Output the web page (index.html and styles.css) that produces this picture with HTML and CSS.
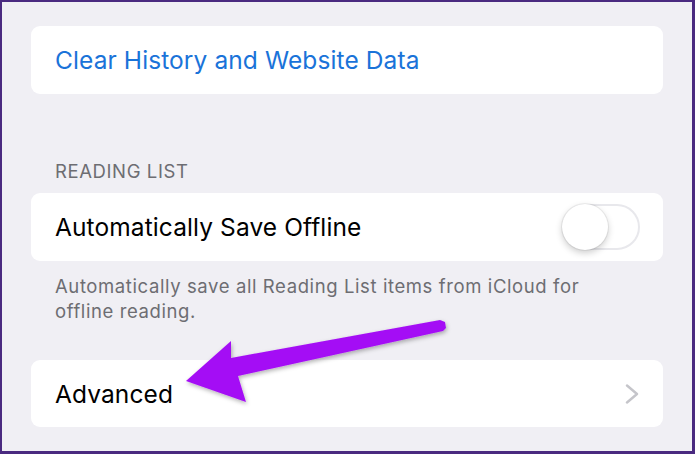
FILE: index.html
```html
<!DOCTYPE html>
<html lang="en">
<head>
    <meta charset="UTF-8">
    <meta name="viewport" content="width=device-width, initial-scale=1.0">
    <title>Safari Settings</title>
    <link rel="stylesheet" href="styles.css">
</head>
<body>
    <div class="frame">
        <div class="card">
            <span class="link">Clear History and Website Data</span>
        </div>

        <div class="section-title">READING LIST</div>
        <div class="card">
            <span class="label">Automatically Save Offline</span>
            <div class="toggle"><div class="knob"></div></div>
        </div>
        <p class="footer">Automatically save all Reading List items from iCloud for offline reading.</p>

        <div class="card last">
            <span class="label">Advanced</span>
            <svg class="chevron" width="14" height="20" viewBox="0 0 14 20">
                <polyline points="2,1.5 12,10 2,18.5" fill="none" stroke="#c5c5ca" stroke-width="2.4" stroke-linecap="round" stroke-linejoin="round"/>
            </svg>
        </div>

        <!-- annotation arrow drawn over the screenshot -->
        <svg class="arrow" width="695" height="454" viewBox="0 0 695 454">
            <defs>
                <filter id="shade" x="-10%" y="-30%" width="120%" height="160%">
                    <feDropShadow dx="1" dy="2" stdDeviation="2" flood-color="#000" flood-opacity="0.3"/>
                </filter>
            </defs>
            <polygon points="186,381 231,341 231,358 440,320 445,322 446,328 443,331 238,376 246,402" fill="#a40ef5" filter="url(#shade)"/>
        </svg>
    </div>
</body>
</html>
```

FILE: styles.css
```css
html, body {
    margin: 0;
    padding: 0;
}

body {
    font-family: Inter, "Liberation Sans", sans-serif;
    background: #efeef3;
}

.frame {
    position: relative;
    box-sizing: border-box;
    width: 695px;
    height: 454px;
    border: 2px solid #4a2a80;
    border-right-width: 3px;
    border-bottom-width: 3px;
    background: #f0eff4;
    padding: 24px 29px 0 29px;
    overflow: hidden;
}

.card {
    display: flex;
    align-items: center;
    justify-content: space-between;
    background: #fff;
    border-radius: 9px;
    height: 68px;
    padding: 0 23px 0 24px;
    box-sizing: border-box;
}

.link {
    font-size: 24.5px;
    color: #1a73d9;
    letter-spacing: 0.1px;
}

.label {
    font-size: 24.5px;
    color: #000;
    letter-spacing: 0.1px;
}

.section-title {
    font-size: 18.5px;
    line-height: 20px;
    color: #6d6d72;
    letter-spacing: 0.6px;
    margin: 67px 0 12px 24px;
}

.footer {
    font-size: 18.5px;
    line-height: 25px;
    color: #6d6d72;
    letter-spacing: 0.6px;
    margin: 13px 60px 36px 24px;
}

.card.last {
    height: 67px;
    padding-right: 24px;
}

.toggle {
    position: relative;
    width: 78px;
    height: 46px;
    box-sizing: border-box;
    border: 2px solid #e8e8ec;
    border-radius: 23px;
    background: #fff;
}

.knob {
    position: absolute;
    left: -2px;
    top: -2px;
    width: 46px;
    height: 46px;
    border-radius: 50%;
    background: #fff;
    box-shadow: 0 3px 7px rgba(0, 0, 0, 0.2), 0 0 0 1px rgba(0, 0, 0, 0.06);
}

.arrow {
    position: absolute;
    left: -2px;
    top: -2px;
    pointer-events: none;
}
```
